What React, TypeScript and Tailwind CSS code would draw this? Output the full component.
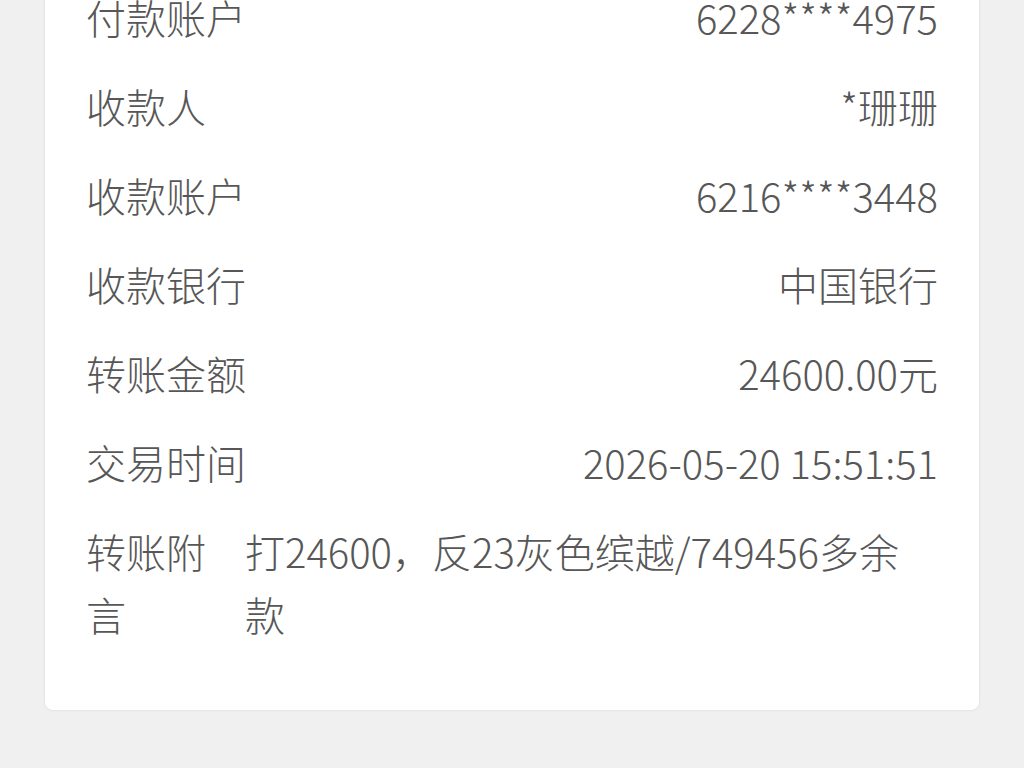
const rows = [
  { label: '付款账户', value: '6228****4975' },
  { label: '收款人', value: '*珊珊' },
  { label: '收款账户', value: '6216****3448' },
  { label: '收款银行', value: '中国银行' },
  { label: '转账金额', value: '24600.00元' },
  { label: '交易时间', value: '2026-05-20 15:51:51' },
];

const App = () => {
  return (
    <div
      className="min-h-[768px] bg-[#f0f0f0] px-[45px] overflow-hidden"
      style={{ fontFamily: '"Noto Sans CJK SC", "Noto Sans", sans-serif' }}
    >
      <div className="-mt-[27px] bg-white rounded-[8px] shadow-[0_0_3px_rgba(0,0,0,0.1)] px-[41px] pb-[51px] text-[40px] font-light leading-[63px] text-[#575757]">
        {rows.map((row) => (
          <div key={row.label} className="flex items-center justify-between py-[13px]">
            <span>{row.label}</span>
            <span>{row.value}</span>
          </div>
        ))}
        <div className="flex py-[13px]">
          <span className="w-[159px] shrink-0 pr-[20px]">转账附言</span>
          <span className="flex-1 break-all">打24600，反23灰色缤越/749456多余款</span>
        </div>
      </div>
    </div>
  );
};

export default App;
